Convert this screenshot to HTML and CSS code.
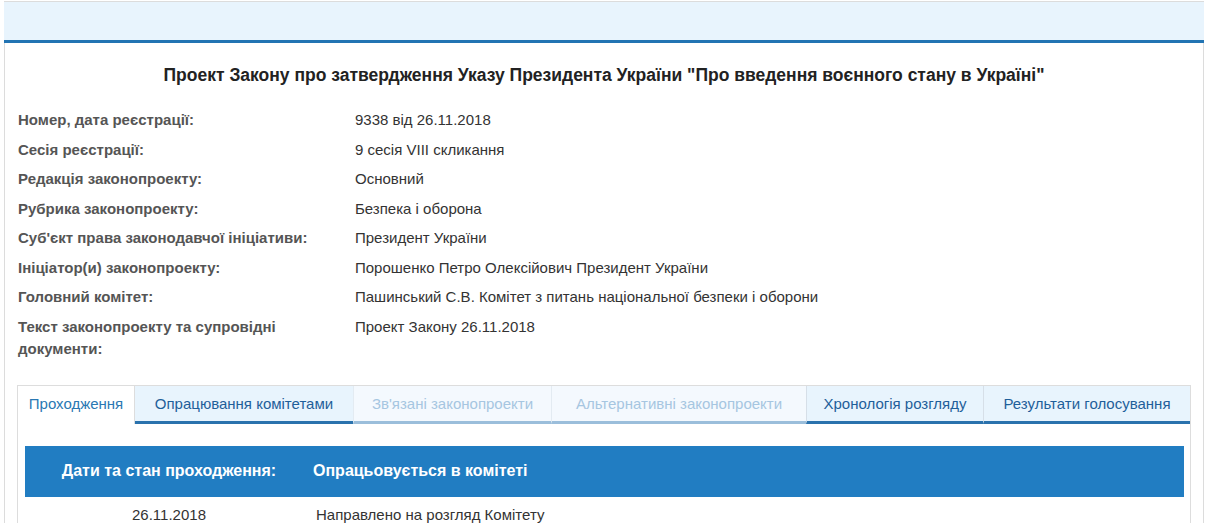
FILE: index.html
```html
<!DOCTYPE html>
<html lang="uk">
<head>
<meta charset="utf-8">
<title>Проект Закону 9338</title>
<link rel="stylesheet" href="styles.css">
</head>
<body>
<div class="page">
  <div class="topband"></div>
  <div class="content">
    <h1 class="title">Проект Закону про затвердження Указу Президента України "Про введення воєнного стану в Україні"</h1>
    <div class="info">
      <div class="label">Номер, дата реєстрації:</div><div class="value">9338 від 26.11.2018</div>
      <div class="label">Сесія реєстрації:</div><div class="value">9 сесія VIII скликання</div>
      <div class="label">Редакція законопроекту:</div><div class="value">Основний</div>
      <div class="label">Рубрика законопроекту:</div><div class="value">Безпека і оборона</div>
      <div class="label">Суб'єкт права законодавчої ініціативи:</div><div class="value">Президент України</div>
      <div class="label">Ініціатор(и) законопроекту:</div><div class="value">Порошенко Петро Олексійович Президент України</div>
      <div class="label">Головний комітет:</div><div class="value">Пашинський С.В. Комітет з питань національної безпеки і оборони</div>
      <div class="label">Текст законопроекту та супровідні документи:</div><div class="value">Проект Закону 26.11.2018</div>
    </div>
    <div class="tabbox">
      <div class="tabs">
        <div class="tab active">Проходження</div>
        <div class="tab">Опрацювання комітетами</div>
        <div class="tab disabled">Зв'язані законопроекти</div>
        <div class="tab disabled">Альтернативні законопроекти</div>
        <div class="tab">Хронологія розгляду</div>
        <div class="tab">Результати голосування</div>
      </div>
      <div class="tabpane">
        <div class="stage">
          <div class="stage-head">
            <div class="sh-left">Дати та стан проходження:</div>
            <div class="sh-right">Опрацьовується в комітеті</div>
          </div>
          <div class="stage-row">
            <div class="sr-date">26.11.2018</div>
            <div class="sr-text">Направлено на розгляд Комітету</div>
          </div>
        </div>
      </div>
    </div>
  </div>
</div>
</body>
</html>
```
FILE: styles.css
```css
* { box-sizing: border-box; }
html, body { margin: 0; padding: 0; background: #fff; }
body {
  font-family: "Liberation Sans", Arial, sans-serif;
  color: #333;
  padding: 1px 0 0 4px;
}
.page {
  width: 1200px;
  border: 1px solid #dcdcdc;
  border-bottom: none;
  min-height: 540px;
}
.topband {
  height: 41px;
  background: #e8f4fd;
  border-bottom: 3px solid #2274b3;
  margin: 0 -1px;
}
.content {
  padding: 21px 12px 0 12px;
}
.title {
  margin: 0;
  text-align: center;
  font-size: 17.5px;
  line-height: 22px;
  font-weight: bold;
  color: #222;
}
.info {
  margin-top: 23px;
  display: grid;
  grid-template-columns: 326px 1fr;
  column-gap: 12px;
  row-gap: 7.5px;
  font-size: 15px;
  line-height: 22px;
}
.label {
  font-weight: bold;
  color: #555;
  padding-left: 1px;
}
.value { color: #333; }
.tabbox {
  margin-top: 25px;
  border: 1px solid #dddddd;
  border-bottom: none;
  min-height: 150px;
}
.tabs {
  display: grid;
  grid-template-columns: 117px 218px 198px 255px 177px 1fr;
  font-size: 15px;
}
.tab {
  height: 38px;
  line-height: 35px;
  text-align: center;
  white-space: nowrap;
  background: #e8f4fd;
  color: #1f5f9a;
  border-bottom: 3px solid #2a72ad;
  border-left: 1px solid #d6dfe8;
}
.tab.active {
  background: #fff;
  color: #2a78b3;
  border-bottom: none;
  border-left: none;
  border-right: 1px solid #dddddd;
}
.tab.active + .tab { border-left: none; }
.tab.disabled {
  background: #f4f9fe;
  color: #a6c6e1;
  border-bottom-color: #9bbedb;
  border-left-color: #e3ebf2;
}
.tabpane {
  padding: 22px 6px 0 7px;
}
.stage-head {
  display: grid;
  grid-template-columns: 288px 1fr;
  height: 51px;
  align-items: center;
  background: #217dc2;
  color: #fff;
  font-weight: bold;
  font-size: 16px;
}
.sh-left { text-align: center; }
.stage-row {
  display: grid;
  grid-template-columns: 288px 1fr;
  font-size: 15px;
  line-height: 22px;
  padding-top: 7px;
  color: #333;
}
.sr-date { text-align: center; }
.sr-text { padding-left: 3px; }
```
